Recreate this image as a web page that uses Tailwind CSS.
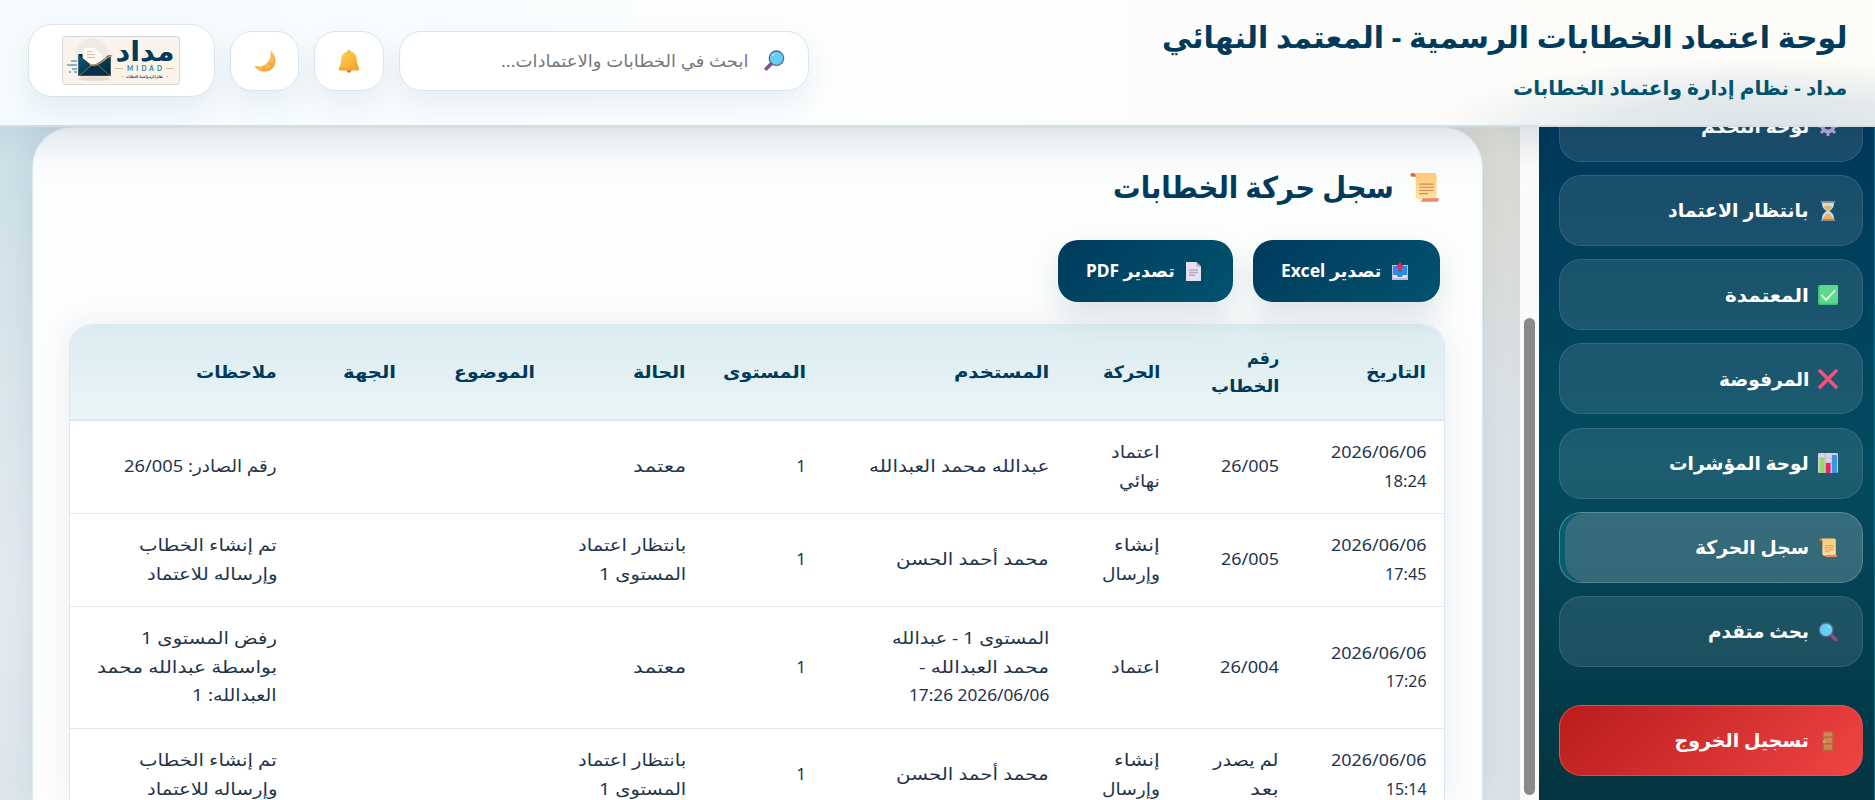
<!DOCTYPE html>
<html lang="ar" dir="rtl">
<head>
<meta charset="utf-8">
<title>لوحة اعتماد الخطابات</title>
<script src="https://cdn.jsdelivr.net/npm/@tailwindcss/browser@4"></script>
</head>
<body class="h-[800px] w-[1875px] overflow-hidden font-['Noto_Sans','DejaVu_Sans',sans-serif] text-[#1f344b] bg-[#dfe6ec]">
<svg class="absolute h-0 w-0">
  <defs>
    <linearGradient id="gold" x1="0" x2="1" y1="0" y2="1"><stop offset="0" stop-color="#ffd24d"/><stop offset="1" stop-color="#f5a02c"/></linearGradient>
    <linearGradient id="paper" x1="0" x2="0" y1="0" y2="1"><stop offset="0" stop-color="#ffc877"/><stop offset="1" stop-color="#ffe2a4"/></linearGradient>
    <linearGradient id="navy" x1="0" x2="1" y1="0" y2="1"><stop offset="0" stop-color="#0b5a72"/><stop offset="1" stop-color="#03203c"/></linearGradient>
    <symbol id="scroll" viewBox="0 0 32 32"><path d="M5 1.500h21a2.500 2.500 0 0 1 2.500 2.500V29H10.500A3.500 3.500 0 0 1 7 25.500V6z" fill="url(#paper)"/><path d="M3.500 1.500C6 1.500 7 3 7 5.500H3.500a2 2 0 0 1 0-4z" fill="#cf6a4a"/><path d="M14 27.500h16.500c.8 2-.3 3.700-2 3.700H10c2.500 0 4-1.500 4-3.700z" fill="#e8896a"/><path d="M10.500 13h15M10.500 16.300h15M10.500 19.600h15M10.500 22.900h9" stroke="#d08a5e" stroke-width="1.200"/></symbol>
    <symbol id="lens" viewBox="0 0 32 32"><path d="M20 20l8.500 8.500" stroke="#8c4f8c" stroke-width="5.500" stroke-linecap="round"/><circle cx="13" cy="12.500" r="11" fill="#64d0ee" stroke="#60609c" stroke-width="2"/><circle cx="18" cy="7.500" r="1.500" fill="#b8f0fb"/></symbol>
  </defs>
</svg>

<div class="flex h-[800px] flex-col overflow-hidden">
  <header class="relative z-10 flex h-[127px] shrink-0 items-start justify-between border-b-2 border-[#d3e0e8] bg-[radial-gradient(ellipse_330px_70px_at_1760px_127px,#dbe4e8_0%,#e4eaec_45%,transparent_100%),linear-gradient(90deg,#f5fbfe_0%,#fdfefe_45%,#fcfcfb_75%,#fffdf7_100%)] pr-[28px] pl-[28px] shadow-[0_8px_30px_rgba(0,55,85,0.08)]">
    <div class="flex flex-col items-start">
      <h1 class="mt-[13px] h-[48px] whitespace-nowrap text-[30px] leading-[48px] font-bold text-[#003b5c]"><span class="inline-block origin-right" data-w="685">لوحة اعتماد الخطابات الرسمية - المعتمد النهائي</span></h1>
      <p class="mt-[9px] whitespace-nowrap text-[20px] leading-[36px] font-bold text-[#00536f]"><span class="inline-block origin-right" data-w="334">مداد - نظام إدارة واعتماد الخطابات</span></p>
    </div>
    <div class="flex items-center gap-[15px] pt-[24px]">
      <div class="flex h-[60px] w-[410px] items-center rounded-[22px] border border-[#d9e6ef] bg-white pr-[23px] shadow-[0_12px_30px_rgba(0,55,85,0.08)]">
        <svg class="h-[21px] w-[21px] -scale-x-100"><use href="#lens"/></svg>
        <div class="mr-[16px] whitespace-nowrap text-[17px] text-[#777]"><span class="inline-block origin-right" data-w="247">ابحث في الخطابات والاعتمادات...</span></div>
      </div>
      <div class="flex h-[60px] w-[70px] items-center justify-center rounded-[22px] border border-[#d9e6ef] bg-white shadow-[0_12px_30px_rgba(0,55,85,0.08)]">
        <svg class="h-[24px] w-[22px]" viewBox="0 0 22 24"><circle cx="11" cy="21.500" r="2.300" fill="#dd7541"/><circle cx="11" cy="3" r="2" fill="#f5ae35"/><path d="M11 2.500c-5.500 0-7.600 4-7.800 8.500-.1 3-.7 4.700-2 7V21h19.600v-3c-1.300-2.300-1.900-4-2-7-.2-4.500-2.300-8.500-7.800-8.500z" fill="url(#gold)"/><path d="M1 18.800h20V21.500H1z" fill="#f0a735"/></svg>
      </div>
      <div class="flex h-[60px] w-[69px] items-center justify-center rounded-[22px] border border-[#d9e6ef] bg-white shadow-[0_12px_30px_rgba(0,55,85,0.08)]">
        <svg class="h-[22px] w-[22px]" viewBox="0 0 22 22"><path d="M16.500.5c6.500 5 6.300 14.500 1.300 18.500C12 23.500 3.500 22 .3 15.500c5.500 1.800 9.500.8 12.700-2.500S17.300 5.500 16.500.5z" fill="#fbb94d"/><path d="M19.500 4.500c2.500 5 1.800 11.500-1.700 14.500-4 3.200-10 3-14 .3 6 1 10.500 0 13.200-3.300 3-3.500 3.300-7.500 2.500-11.500z" fill="#e99a3d" opacity=".55"/><circle cx="16" cy="14" r="1.200" fill="#e0983f"/><circle cx="10" cy="18" r="1.200" fill="#e0983f"/></svg>
      </div>
      <div class="flex h-[73px] w-[187px] items-center rounded-[24px] border border-[#d9e6ef] bg-white pr-[34px] shadow-[0_12px_30px_rgba(0,55,85,0.08)]">
        <svg class="h-[49px] w-[118px] overflow-visible" viewBox="0 0 118 49">
          <rect x=".5" y=".5" width="117" height="48" rx="2.500" fill="#faf3ec" stroke="#d9d9dc"/>
          <circle cx="30" cy="18" r="16" fill="#eeeae6"/>
          <ellipse cx="32" cy="43" rx="16" ry="1.800" fill="#e3dcd6"/>
          <path d="M16.500 18h4v6h24v-4l4-1v21h-32z" fill="#092c49"/>
          <path d="M22 12h11c1 0 1 3 3 4l4 2v10l-9 6-9-6z" fill="#fffaf4"/><path d="M25 15.500h5M25 18.500h8M25 21.500h8" stroke="#d8b988" stroke-width=".9"/>
          <path d="M16.500 19v21l13-11zM48.500 20v20L36 29z" fill="url(#navy)"/>
          <path d="M17 40l12.500-11q3 2 6.500 0L48.500 40z" fill="#062d4a" stroke="#cda768" stroke-width=".6"/>
          <path d="M27 28.500c11 2 13-8 24-9.500-6 2-10 12-20 11z" fill="#102f4d"/><path d="M28 28.500c11 3 13-7 22-9" fill="none" stroke="#d3a65a" stroke-width="1.300"/>
          <path d="M9 25h6M5 29h10M10 33h5M7 36h2M12 36h3" stroke="#18768a" stroke-width="1.100"/>
          <text x="112.500" y="24.500" direction="rtl" textLength="59" lengthAdjust="spacingAndGlyphs" font-family="DejaVu Sans" font-weight="bold" font-size="27" fill="#06395a">مداد</text>
          <path d="M53 32.500h8M104 32.500h8" stroke="#dcae67" stroke-width=".8"/>
          <text x="65" y="35" direction="ltr" textLength="35" font-family="Lato" font-weight="bold" font-size="6.500" fill="#278895">MIDAD</text>
          <text x="101" y="42" direction="rtl" textLength="37" lengthAdjust="spacingAndGlyphs" font-family="DejaVu Sans" font-weight="bold" font-size="4" fill="#24394c">نظام إدارة واعتماد الخطابات</text>
          <circle cx="60.500" cy="40.500" r=".7" fill="#dcae67"/><circle cx="105.500" cy="40.500" r=".7" fill="#dcae67"/>
        </svg>
      </div>
    </div>
  </header>

  <div class="flex h-[673px] overflow-hidden">
    <div class="w-px shrink-0 bg-[#087083]"></div>
    <aside class="flex h-[673px] w-[335px] shrink-0 flex-col justify-end overflow-hidden bg-[linear-gradient(180deg,#00385a_0%,#034b60_50%,#043440_100%)] pr-[11px] pb-[24px] pl-[20px] text-[19px] font-bold text-white">
      <nav class="flex flex-col gap-[13.2px]">
        <div class="flex h-[71px] shrink-0 items-center gap-[9px] rounded-[22px] border border-white/10 bg-white/10 pr-[24px]">
          <svg class="h-[20px] w-[20px]" viewBox="0 0 20 20"><circle cx="10" cy="10" r="5.500" fill="none" stroke="#b7a2d0" stroke-width="4"/><path d="M10 0v4M10 16v4M0 10h4M16 10h4M3 3l3 3M14 14l3 3M17 3l-3 3M6 14l-3 3" stroke="#b7a2d0" stroke-width="3"/></svg>
          <span class="inline-block origin-right whitespace-nowrap" data-w="108">لوحة التحكم</span></div>
        <div class="flex h-[71px] shrink-0 items-center gap-[9px] rounded-[22px] border border-white/10 bg-white/10 pr-[24px]">
          <svg class="h-[20px] w-[20px]" viewBox="0 0 20 20"><path d="M4 1h12c0 5-1 6.500-4.500 9 3.500 2.500 4.500 4 4.500 9H4c0-5 1-6.500 4.500-9C5 7.500 4 6 4 1z" fill="#b9e3f3"/><path d="M6 5h8c0 2-1.500 3-4 5-2.500-2-4-3-4-5zM10 12c2 1.500 4.500 3.500 4.700 6H5.300c.2-2.500 2.700-4.500 4.700-6z" fill="#f5b04b"/><path d="M3 0h14v2H3zM3 18h14v2H3z" fill="#988b8c"/></svg>
          <span class="inline-block origin-right whitespace-nowrap" data-w="141">بانتظار الاعتماد</span></div>
        <div class="flex h-[71px] shrink-0 items-center gap-[9px] rounded-[22px] border border-white/10 bg-white/10 pr-[24px]">
          <svg class="h-[20px] w-[20px]" viewBox="0 0 20 20"><rect width="20" height="20" rx="2" fill="#43bd78"/><rect x="1.500" width="18.500" height="18.500" rx="1.500" fill="#5bd98d"/><path d="M4 10.500l4 4.500 8.500-9" fill="none" stroke="#fff" stroke-width="1.800" stroke-linecap="round" stroke-linejoin="round"/></svg>
          <span class="inline-block origin-right whitespace-nowrap" data-w="84">المعتمدة</span></div>
        <div class="flex h-[71px] shrink-0 items-center gap-[9px] rounded-[22px] border border-white/10 bg-white/10 pr-[24px]">
          <svg class="h-[20px] w-[20px]" viewBox="0 0 20 20"><path d="M2 2l16 16M18 2L2 18" stroke="#f8507a" stroke-width="3.600" stroke-linecap="round"/></svg>
          <span class="inline-block origin-right whitespace-nowrap" data-w="90">المرفوضة</span></div>
        <div class="flex h-[71px] shrink-0 items-center gap-[9px] rounded-[22px] border border-white/10 bg-white/10 pr-[24px]">
          <svg class="h-[20px] w-[20px]" viewBox="0 0 20 20"><rect width="20" height="20" rx="1.500" fill="#ddd3e8"/><path d="M0 5h20M0 10h20M0 15h20M7 0v20M14 0v20" stroke="#b8adc4" stroke-width=".7"/><path d="M1.500 5h5v15h-5z" fill="#97dc62"/><path d="M7.800 10h4.800v10H7.800z" fill="#e3276b"/><path d="M14 2h5v18h-5z" fill="#3c94e2"/></svg>
          <span class="inline-block origin-right whitespace-nowrap" data-w="140">لوحة المؤشرات</span></div>
        <div class="flex h-[71px] shrink-0 items-center gap-[9px] rounded-[22px] border border-white/20 bg-white/20 pr-[24px] shadow-[inset_5px_0_0_#00606f]">
          <svg class="h-[21px] w-[20px]"><use href="#scroll"/></svg>
          <span class="inline-block origin-right whitespace-nowrap" data-w="114">سجل الحركة</span></div>
        <div class="flex h-[71px] shrink-0 items-center gap-[9px] rounded-[22px] border border-white/10 bg-white/10 pr-[24px]">
          <svg class="h-[20px] w-[20px]"><use href="#lens"/></svg>
          <span class="inline-block origin-right whitespace-nowrap" data-w="101">بحث متقدم</span></div>
      </nav>
      <div class="mt-[38px] flex h-[71px] shrink-0 items-center gap-[9px] rounded-[22px] border border-[#f05a5a]/70 bg-[linear-gradient(315deg,#ef4444,#b91c1c)] pr-[24px]">
        <svg class="h-[20px] w-[20px]" viewBox="0 0 20 20"><path d="M4.500 0h11v20h-11z" fill="#b8683d"/><path d="M6 1.500h8v4H6zM6 7h8v5H6zM6 13.500h8v5H6z" fill="#cf8657"/><circle cx="6" cy="10.500" r="1" fill="#f2bd4d"/></svg>
        <span class="inline-block origin-right whitespace-nowrap" data-w="134">تسجيل الخروج</span></div>
    </aside>
    <div class="w-[19px] shrink-0 bg-[linear-gradient(180deg,#eceeef,#fbfbfb_50px,#fafafa)] pt-[191px] pr-[4px]"><div class="h-[477px] w-[11px] rounded-full bg-[#8a8a8a]"></div></div>

    <main class="h-[673px] w-[1520px] shrink-0 overflow-hidden bg-[linear-gradient(180deg,#cbdfe7_0%,#d8e6ec_35%,#e4eaf1_70%,#dce6ec_100%)] pr-[37px] pl-[32px] bg-[linear-gradient(270deg,#c8cfd340_0px,transparent_30px),radial-gradient(circle_300px_at_1520px_0px,#dcdcd4_0%,#dcdcd4_20%,transparent_100%),linear-gradient(90deg,transparent_50%,#dde4ea_98%),linear-gradient(180deg,#cbdfe7_0%,#d8e6ec_35%,#e4eaf1_70%,#dce6ec_100%)]">
      <section class="h-[673px] rounded-t-[40px] border border-b-0 border-[#dce9f0] bg-[linear-gradient(180deg,#eff2f4_0px,#fcfdfd_50px,#fdfdfe_100%)] pr-[37px] pl-[36px] shadow-[0_0_30px_rgba(0,55,85,0.09)]">
        <div class="flex items-center gap-[15px] pt-[37px] pr-[5px]">
          <svg class="h-[32px] w-[31px] shrink-0 self-center"><use href="#scroll"/></svg>
          <h2 class="whitespace-nowrap text-[30px] leading-[44px] font-bold text-[#003b5c]"><span class="inline-block origin-right" data-w="281">سجل حركة الخطابات</span></h2>
        </div>
        <div class="mt-[31px] flex gap-[20px] pr-[5px] text-[17px] font-bold text-white">
          <div class="flex h-[62px] w-[187px] items-center gap-[11px] rounded-[20px] bg-[linear-gradient(135deg,#003b5c,#00536f)] pr-[32px] shadow-[0_14px_28px_rgba(0,55,85,0.12)]">
            <svg class="h-[18px] w-[16px] shrink-0" viewBox="0 0 16 18"><path d="M0 3h16v15H0z" fill="#c9b9df"/><path d="M1 4h14v9h-4l-2 3H6l-2-3H1z" fill="#2b8be0"/><path d="M1 13h3.500l1.500 2h4l1.500-2H15v3H1z" fill="#eadff2"/><path d="M8 0l4 5H9.500v5h-3V5H4z" fill="#d72b5a"/></svg>
            <span class="inline-block origin-right whitespace-nowrap" data-w="100">تصدير Excel</span></div>
          <div class="flex h-[62px] w-[175px] items-center gap-[11px] rounded-[20px] bg-[linear-gradient(135deg,#003b5c,#00536f)] pr-[32px] shadow-[0_14px_28px_rgba(0,55,85,0.12)]">
            <svg class="h-[19px] w-[15px] shrink-0" viewBox="0 0 15 19"><path d="M0 0h10.500L15 4.500V19H0z" fill="#eadff0"/><path d="M10.500 0L15 4.500h-4.500z" fill="#b9a9c5"/><path d="M3 8h9M3 10.500h9M3 13h6" stroke="#b9a9c5" stroke-width="1.300"/></svg>
            <span class="inline-block origin-right whitespace-nowrap" data-w="89">تصدير PDF</span></div>
        </div>
        <div class="mt-[22px] h-[476px] overflow-hidden rounded-t-[24px] border border-b-0 border-[#dce8ef] bg-white shadow-[0_0_28px_rgba(0,55,85,0.08)]">
          <table class="w-full table-fixed border-collapse text-right text-[17px] leading-[28.500px] whitespace-nowrap">
            <colgroup><col class="w-[147px]"><col class="w-[119px]"><col class="w-[111px]"><col class="w-[243px]"><col class="w-[120px]"><col class="w-[151px]"><col class="w-[139px]"><col class="w-[119px]"><col class="w-[226px]"></colgroup>
            <thead>
              <tr class="h-[95px] border-b border-[#d7e5ec] bg-[linear-gradient(180deg,#dbecf1,#eaf4f6)] font-bold text-[#003b5c]">
                <th class="pr-[18px]"><span class="inline-block origin-right" data-w="60">التاريخ</span></th>
                <th class="pr-[18px]"><span class="inline-block origin-right" data-w="32">رقم</span><br><span class="inline-block origin-right" data-w="69">الخطاب</span></th>
                <th class="pr-[18px]"><span class="inline-block origin-right" data-w="57">الحركة</span></th>
                <th class="pr-[18px]"><span class="inline-block origin-right" data-w="95">المستخدم</span></th>
                <th class="pr-[18px]"><span class="inline-block origin-right" data-w="83">المستوى</span></th>
                <th class="pr-[18px]"><span class="inline-block origin-right" data-w="53">الحالة</span></th>
                <th class="pr-[18px]"><span class="inline-block origin-right" data-w="81">الموضوع</span></th>
                <th class="pr-[18px]"><span class="inline-block origin-right" data-w="53">الجهة</span></th>
                <th class="pr-[18px]"><span class="inline-block origin-right" data-w="81">ملاحظات</span></th>
              </tr>
            </thead>
            <tbody>
              <tr class="h-[93px] border-b border-[#dde8ef]">
                <td class="pr-[18px]"><span class="inline-block origin-right" data-w="95">2026/06/06</span><br><span class="inline-block origin-right" data-w="42">18:24</span></td>
                <td class="pr-[18px]"><span class="inline-block origin-right" data-w="58">26/005</span></td>
                <td class="pr-[18px]"><span class="inline-block origin-right" data-w="49">اعتماد</span><br><span class="inline-block origin-right" data-w="41">نهائي</span></td>
                <td class="pr-[18px]"><span class="inline-block origin-right" data-w="180">عبدالله محمد العبدالله</span></td>
                <td class="pr-[18px]">1</td>
                <td class="pr-[18px]"><span class="inline-block origin-right" data-w="53">معتمد</span></td>
                <td></td><td></td>
                <td class="pr-[18px]"><span class="inline-block origin-right" data-w="153">رقم الصادر: 26/005</span></td>
              </tr>
              <tr class="h-[93px] border-b border-[#dde8ef]">
                <td class="pr-[18px]"><span class="inline-block origin-right" data-w="95">2026/06/06</span><br><span class="inline-block origin-right" data-w="41">17:45</span></td>
                <td class="pr-[18px]"><span class="inline-block origin-right" data-w="58">26/005</span></td>
                <td class="pr-[18px]"><span class="inline-block origin-right" data-w="46">إنشاء</span><br><span class="inline-block origin-right" data-w="58">وإرسال</span></td>
                <td class="pr-[18px]"><span class="inline-block origin-right" data-w="153">محمد أحمد الحسن</span></td>
                <td class="pr-[18px]">1</td>
                <td class="pr-[18px]"><span class="inline-block origin-right" data-w="108">بانتظار اعتماد</span><br><span class="inline-block origin-right" data-w="87">المستوى 1</span></td>
                <td></td><td></td>
                <td class="pr-[18px]"><span class="inline-block origin-right" data-w="138">تم إنشاء الخطاب</span><br><span class="inline-block origin-right" data-w="130">وإرساله للاعتماد</span></td>
              </tr>
              <tr class="h-[122px] border-b border-[#dde8ef]">
                <td class="pr-[18px]"><span class="inline-block origin-right" data-w="95">2026/06/06</span><br><span class="inline-block origin-right" data-w="40">17:26</span></td>
                <td class="pr-[18px]"><span class="inline-block origin-right" data-w="59">26/004</span></td>
                <td class="pr-[18px]"><span class="inline-block origin-right" data-w="49">اعتماد</span></td>
                <td class="pr-[18px]"><span class="inline-block origin-right" data-w="157">المستوى 1 - عبدالله</span><br><span class="inline-block origin-right" data-w="130">محمد العبدالله -</span><br><span class="inline-block origin-right" data-w="140">2026/06/06 17:26</span></td>
                <td class="pr-[18px]">1</td>
                <td class="pr-[18px]"><span class="inline-block origin-right" data-w="53">معتمد</span></td>
                <td></td><td></td>
                <td class="pr-[18px]"><span class="inline-block origin-right" data-w="136">رفض المستوى 1</span><br><span class="inline-block origin-right" data-w="180">بواسطة عبدالله محمد</span><br><span class="inline-block origin-right" data-w="85">العبدالله: 1</span></td>
              </tr>
              <tr class="h-[93px] border-b border-[#dde8ef]">
                <td class="pr-[18px]"><span class="inline-block origin-right" data-w="95">2026/06/06</span><br><span class="inline-block origin-right" data-w="40">15:14</span></td>
                <td class="pr-[18px]"><span class="inline-block origin-right" data-w="66">لم يصدر</span><br><span class="inline-block origin-right" data-w="29">بعد</span></td>
                <td class="pr-[18px]"><span class="inline-block origin-right" data-w="46">إنشاء</span><br><span class="inline-block origin-right" data-w="58">وإرسال</span></td>
                <td class="pr-[18px]"><span class="inline-block origin-right" data-w="153">محمد أحمد الحسن</span></td>
                <td class="pr-[18px]">1</td>
                <td class="pr-[18px]"><span class="inline-block origin-right" data-w="108">بانتظار اعتماد</span><br><span class="inline-block origin-right" data-w="87">المستوى 1</span></td>
                <td></td><td></td>
                <td class="pr-[18px]"><span class="inline-block origin-right" data-w="138">تم إنشاء الخطاب</span><br><span class="inline-block origin-right" data-w="130">وإرساله للاعتماد</span></td>
              </tr>
            </tbody>
          </table>
        </div>
      </section>
    </main>
  </div>
</div>
<script>
  // Condense or widen each label to its set width, again whenever its natural width changes.
  function fit(el) {
    if (el.offsetWidth) el.style.transform = 'scaleX(' + (el.dataset.w / el.offsetWidth) + ')';
  }
  var watcher = new ResizeObserver(function (entries) {
    entries.forEach(function (entry) { fit(entry.target); });
  });
  function fitAll() { document.querySelectorAll('[data-w]').forEach(fit); }
  document.querySelectorAll('[data-w]').forEach(function (el) { fit(el); watcher.observe(el); });
  window.addEventListener('load', fitAll);
  document.fonts.ready.then(fitAll);
</script>
</body>
</html>
